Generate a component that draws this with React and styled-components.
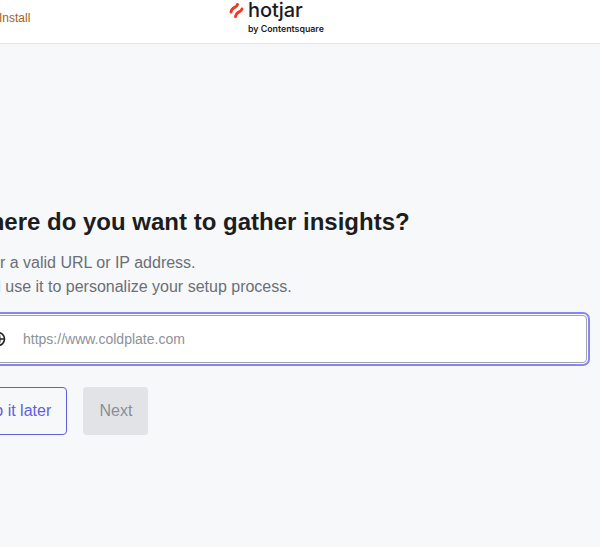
import React from 'react';
import styled, { createGlobalStyle } from 'styled-components';

const Global = createGlobalStyle`
  html, body { margin: 0; padding: 0; height: 100%; background: #f7f8fa; overflow: hidden; }
  body { font-family: "Liberation Sans", Arial, sans-serif; }
`;

const Page = styled.div`
  width: 600px;
  height: 547px;
  overflow: hidden;
  display: flex;
  flex-direction: column;
`;

const Header = styled.header`
  height: 43px;
  flex: none;
  background: #fff;
  border-bottom: 1px solid #e3e5ea;
  display: grid;
  grid-template-columns: 229px auto 1fr;
`;

const StepLabel = styled.span`
  font-size: 12px;
  line-height: 15px;
  color: #a85f12;
  margin: 11px 0 0 -1px;
`;

const Logo = styled.div`
  display: flex;
  flex-direction: column;
  align-items: flex-start;
`;

const LogoTop = styled.div`
  display: flex;
  align-items: center;
  gap: 4px;
  height: 20px;
`;

const LogoWord = styled.span`
  font-family: Inter, sans-serif;
  font-size: 20px;
  font-weight: 500;
  line-height: 20px;
  letter-spacing: -0.1px;
  color: #1b1b1f;
`;

const LogoSub = styled.span`
  font-family: Inter, sans-serif;
  font-size: 8.8px;
  font-weight: 600;
  line-height: 10px;
  color: #1b1b1f;
  margin: 4px 0 0 19px;
`;

const Main = styled.main`
  margin: 163px 0 0 -33px;
  width: 620px;
  display: flex;
  flex-direction: column;
`;

const Title = styled.h1`
  margin: 0;
  font-size: 24px;
  line-height: 30px;
  font-weight: 700;
  color: #1d1d20;
  white-space: nowrap;
`;

const Help = styled.p`
  margin: 14px 0 0;
  font-size: 16px;
  line-height: 24px;
  color: #6b6f76;
  white-space: nowrap;
`;

const InputBox = styled.div`
  margin-top: 16px;
  height: 46px;
  background: #fff;
  border: 1px solid #a0a4aa;
  border-radius: 4px;
  box-shadow: 0 0 0 1px #fff, 0 0 0 3px #8585f5;
  display: flex;
  align-items: center;
  gap: 17px;
  padding-left: 22px;
`;

const Url = styled.span`
  font-size: 14px;
  color: #8d9199;
`;

const Actions = styled.div`
  margin-top: 24px;
  display: flex;
  gap: 16px;
`;

const Later = styled.button`
  width: 100px;
  height: 48px;
  padding: 0;
  font: 400 16px "Liberation Sans", Arial, sans-serif;
  color: #5f5fe0;
  background: transparent;
  border: 1px solid #5f5fe0;
  border-radius: 4px;
`;

const Next = styled.button`
  width: 65px;
  height: 48px;
  padding: 0 0 0 1px;
  font: 400 16px "Liberation Sans", Arial, sans-serif;
  color: #8a8e95;
  background: #e2e3e6;
  border: none;
  border-radius: 4px;
`;

const GlobeIcon = () => (
  <svg width="16" height="16" viewBox="0 0 16 16" fill="none" stroke="#222225" strokeWidth="1.6">
    <circle cx="8" cy="8" r="6.5" />
    <path d="M1.5 8h13M8 1.5c-2.4 2-2.4 11 0 13M8 1.5c2.4 2 2.4 11 0 13" />
  </svg>
);

const LogoMark = () => (
  <svg width="15" height="17" viewBox="0 0 15 17" fill="none" stroke="#f03a1f" strokeWidth="3" strokeLinecap="round">
    <path d="M8.5 2.5 C8 4.5 6 5 4.5 6 C3 7 2.4 8 2 10" />
    <path d="M13 7 C12.5 9 10.5 9.5 9 10.5 C7.5 11.5 6.9 12.5 6.5 14.5" />
  </svg>
);

export default function App() {
  return (
    <>
      <Global />
      <Page>
        <Header>
          <StepLabel>Install</StepLabel>
          <Logo>
            <LogoTop>
              <LogoMark />
              <LogoWord>hotjar</LogoWord>
            </LogoTop>
            <LogoSub>by Contentsquare</LogoSub>
          </Logo>
        </Header>
        <Main>
          <Title>Where do you want to gather insights?</Title>
          <Help>
            Enter a valid URL or IP address.
            <br />
            We'll use it to personalize your setup process.
          </Help>
          <InputBox>
            <GlobeIcon />
            <Url>https://www.coldplate.com</Url>
          </InputBox>
          <Actions>
            <Later>Do it later</Later>
            <Next>Next</Next>
          </Actions>
        </Main>
      </Page>
    </>
  );
}
